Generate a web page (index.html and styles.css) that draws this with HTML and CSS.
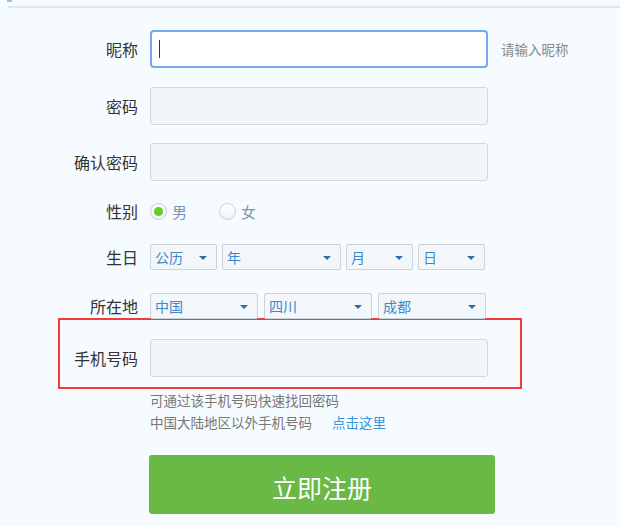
FILE: index.html
```html
<!DOCTYPE html>
<html lang="zh-CN">
<head>
<meta charset="utf-8">
<title>注册</title>
<link rel="stylesheet" href="styles.css">
</head>
<body>
<div class="header">
  <div class="header-mark"></div>
  <div class="header-line"></div>
</div>
<form class="form">
  <div class="row row-text">
    <label class="label">昵称</label>
    <div class="input focused"><span class="caret"></span></div>
    <span class="side-hint">请输入昵称</span>
  </div>
  <div class="row row-text row-2">
    <label class="label">密码</label>
    <div class="input"></div>
  </div>
  <div class="row row-text row-3">
    <label class="label">确认密码</label>
    <div class="input"></div>
  </div>
  <div class="row row-gender">
    <label class="label">性别</label>
    <span class="radio checked"></span><span class="radio-text">男</span>
    <span class="radio radio-second"></span><span class="radio-text">女</span>
  </div>
  <div class="row row-select">
    <label class="label">生日</label>
    <div class="selects">
      <div class="select w67"><span>公历</span><i class="arrow"></i></div>
      <div class="select w119"><span>年</span><i class="arrow"></i></div>
      <div class="select w67"><span>月</span><i class="arrow"></i></div>
      <div class="select w67"><span>日</span><i class="arrow"></i></div>
    </div>
  </div>
  <div class="row row-select row-location">
    <label class="label">所在地</label>
    <div class="selects wide-gap">
      <div class="select w108"><span>中国</span><i class="arrow"></i></div>
      <div class="select w108"><span>四川</span><i class="arrow"></i></div>
      <div class="select w108"><span>成都</span><i class="arrow"></i></div>
    </div>
  </div>
  <div class="row row-text highlight">
    <label class="label">手机号码</label>
    <div class="input"></div>
  </div>
  <div class="hints">
    <p>可通过该手机号码快速找回密码</p>
    <p>中国大陆地区以外手机号码<a class="link">点击这里</a></p>
  </div>
  <div class="actions">
    <button type="button" class="submit">立即注册</button>
  </div>
</form>
</body>
</html>
```

FILE: styles.css
```css
html, body {
  margin: 0;
  padding: 0;
}
body {
  background: #f5fbff;
  font-family: "Noto Sans CJK SC", "Noto Sans", sans-serif;
  color: #333;
  width: 620px;
  height: 526px;
  overflow: hidden;
}
.header {
  margin-left: 7px;
  height: 8px;
  display: flex;
  flex-direction: column;
}
.header-mark {
  width: 5px;
  height: 2px;
  background: #8cc6f0;
}
.header-line {
  margin-top: 4px;
  margin-left: 1px;
  height: 2px;
  background: #e4e7ea;
}
.form {
  margin: 22px 0 0 0;
}
.row {
  display: flex;
  align-items: center;
}
.label {
  width: 138px;
  margin-right: 12px;
  text-align: right;
  font-size: 16px;
  line-height: 20px;
  color: #333;
  flex-shrink: 0;
}
.input {
  width: 338px;
  height: 38px;
  box-sizing: border-box;
  border: 1px solid #d0d9e2;
  border-radius: 3px;
  background: #f2f6fa;
  display: flex;
  align-items: center;
}
.input.focused {
  border: 2px solid #74a9ee;
  background: #ffffff;
  border-radius: 4px;
}
.caret {
  width: 1px;
  height: 18px;
  background: #333;
  margin-left: 7px;
}
.side-hint {
  margin-left: 13px;
  font-size: 13.5px;
  color: #888;
}
.row-2 {
  margin-top: 19px;
}
.row-3 {
  margin-top: 18px;
}
.row-gender {
  margin-top: 20px;
  height: 20px;
}
.radio {
  width: 17px;
  height: 17px;
  box-sizing: border-box;
  border-radius: 50%;
  border: 1px solid #c7cfd7;
  background: linear-gradient(#ffffff, #eef2f6);
  display: flex;
  align-items: center;
  justify-content: center;
}
.radio.checked::after {
  content: "";
  width: 9px;
  height: 9px;
  border-radius: 50%;
  background: #62cc2a;
}
.radio-text {
  margin-left: 5px;
  font-size: 15px;
  color: #7b96b3;
}
.radio-second {
  margin-left: 32px;
}
.row-select {
  margin-top: 23px;
}
.row-location {
  margin-top: 23px;
}
.selects {
  display: flex;
  gap: 5px;
}
.selects.wide-gap {
  gap: 6px;
}
.select {
  height: 26px;
  box-sizing: border-box;
  border: 1px solid #c9d3dd;
  border-radius: 2px;
  background: #f3f7fa;
  display: flex;
  align-items: center;
  justify-content: space-between;
  padding: 0 9px 0 4px;
  font-size: 14px;
  color: #3a88d0;
}
.w67 { width: 67px; }
.w119 { width: 119px; }
.w108 { width: 108px; }
.arrow {
  width: 0;
  height: 0;
  border-left: 4px solid transparent;
  border-right: 4px solid transparent;
  border-top: 4px solid #2f6ea8;
  margin-top: 2px;
}
.highlight {
  margin-top: -1px;
  margin-left: 58px;
  width: 464px;
  box-sizing: border-box;
  border: 2px solid #f23b3b;
  padding: 19px 0 10px 0;
}
.highlight .label {
  width: 78px;
}
.hints {
  margin-left: 150px;
  font-size: 13.5px;
  color: #777;
}
.hints p {
  margin: 0;
  line-height: 22px;
}
.link {
  margin-left: 20px;
  color: #3a94dc;
  cursor: pointer;
}
.actions {
  margin: 22px 0 0 149px;
}
.submit {
  width: 346px;
  height: 59px;
  border: none;
  border-radius: 3px;
  background: #6ab946;
  color: #ffffff;
  font-family: "Noto Sans CJK SC", "Noto Sans", sans-serif;
  font-size: 25px;
  padding: 4px 0 0 0;
  cursor: pointer;
}
```
